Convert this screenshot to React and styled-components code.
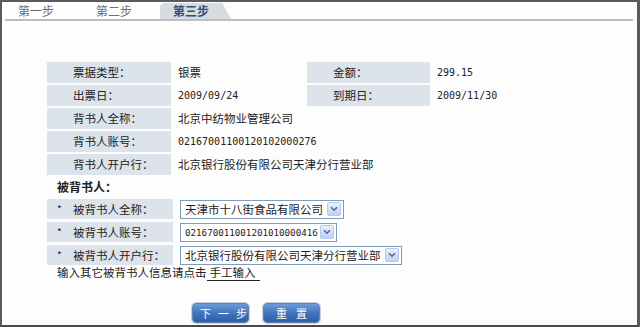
import React from 'react';
import styled, { createGlobalStyle } from 'styled-components';

const Global = createGlobalStyle`
  html, body { margin: 0; padding: 0; background: #fff; }
  body {
    font-family: "Noto Sans CJK SC", "Noto Sans", sans-serif;
    font-size: 12px;
    color: #222;
  }
`;

const Frame = styled.div`
  box-sizing: border-box;
  width: 640px;
  height: 327px;
  border-top: 2px solid #5b5b5b;
  border-left: 2px solid #5b5b5b;
  border-right: 3px solid #5b5b5b;
  border-bottom: 2px solid #4a4a4a;
  background: #fdfdfd;
  display: flex;
  flex-direction: column;
  overflow: hidden;
`;

const TabBar = styled.div`
  display: flex;
  align-items: flex-end;
  height: 17px;
  margin: 0 4px 0 3px;
  padding-left: 13px;
  border-bottom: 2px solid #bdbdbd;
`;

const Tab = styled.div`
  margin-left: ${p => p.$gap || 0}px;
  height: 16px;
  line-height: 16px;
  font-size: 12px;
  white-space: nowrap;
  color: ${p => (p.$active ? '#2f4f7f' : '#6d6d6d')};
  font-weight: ${p => (p.$active ? 700 : 400)};
  padding: ${p => (p.$active ? '0 22px 0 13px' : '0')};
  background: ${p => (p.$active ? '#d7dce2' : 'transparent')};
  clip-path: ${p =>
    p.$active
      ? 'polygon(0 100%, 0 3px, 3px 0, calc(100% - 9px) 0, 100% 100%)'
      : 'none'};
`;

const InfoGrid = styled.div`
  display: grid;
  grid-template-columns: 124px 136px 123px 120px;
  grid-auto-rows: 21px;
  row-gap: 2px;
  margin: 41px 0 0 45px;
`;

const Label = styled.div`
  background: #dce3ea;
  padding-left: 26px;
  line-height: 21px;
  font-size: 11.5px;
  white-space: nowrap;
`;

const Value = styled.div`
  padding-left: 7px;
  line-height: 21px;
  white-space: nowrap;
  grid-column: ${p => (p.$span ? '2 / span 3' : 'auto')};
  font-family: ${p => (p.$mono ? '"DejaVu Sans Mono", monospace' : 'inherit')};
  font-size: ${p => (p.$mono ? '10px' : '11.5px')};
`;

const Heading = styled.div`
  margin: 2px 0 0 55px;
  line-height: 20px;
  font-size: 12px;
  font-weight: 700;
`;

const EndorseGrid = styled.div`
  display: grid;
  grid-template-columns: 126px auto;
  grid-auto-rows: 20px;
  row-gap: 3px;
  justify-items: start;
  margin: 2px 0 0 45px;
`;

const ReqLabel = styled.div`
  justify-self: stretch;
  background: #dce3ea;
  padding-left: 10px;
  line-height: 20px;
  font-size: 11.5px;
  white-space: nowrap;
  display: flex;
  gap: 10px;
`;

const Star = styled.span`
  width: 6px;
  font-size: 10px;
`;

const SelectCell = styled.div`
  padding-left: 7px;
  display: flex;
  align-items: center;
`;

const SelectBox = styled.div`
  box-sizing: border-box;
  width: ${p => p.$w}px;
  height: 19px;
  border: 1px solid #7f9db9;
  background: #fff;
  display: flex;
  align-items: center;
  justify-content: space-between;
  padding: 0 2px 0 4px;
  white-space: nowrap;
  font-family: ${p => (p.$mono ? '"DejaVu Sans Mono", monospace' : 'inherit')};
  font-size: ${p => (p.$mono ? '9.2px' : '11.5px')};
`;

const ArrowBox = styled.span`
  box-sizing: border-box;
  width: 14px;
  height: 14px;
  border: 1px solid #b8c9ec;
  border-radius: 2px;
  background: linear-gradient(#eaf0fc, #bfd0f4);
  display: flex;
  align-items: center;
  justify-content: center;
`;

const Note = styled.div`
  margin: 0 0 0 55px;
  line-height: 14px;
  font-size: 11.5px;
  white-space: nowrap;
`;

const ManualLink = styled.span`
  padding: 0 4px 0 3px;
  border-bottom: 1px solid #222;
`;

const ButtonRow = styled.div`
  display: flex;
  gap: 14px;
  margin: 24px 0 0 190px;
`;

const Button = styled.div`
  box-sizing: border-box;
  width: 57px;
  height: 20px;
  border-radius: 4px;
  border: 1px solid #5f82b3;
  box-shadow: 0 0 0 1px #c3d0e2;
  background: linear-gradient(#6b9bd6, #3f72bb 55%, #2f5fa6);
  color: #fff;
  font-size: 11px;
  line-height: 18px;
  text-align: center;
  letter-spacing: ${p => p.$ls}px;
  text-indent: ${p => p.$ls}px;
  white-space: nowrap;
`;

const Arrow = () => (
  <ArrowBox>
    <svg width="8" height="6" viewBox="0 0 8 6">
      <path d="M1 1.2 L4 4.2 L7 1.2" fill="none" stroke="#4a6aa5" strokeWidth="1.6" />
    </svg>
  </ArrowBox>
);

export default function App() {
  return (
    <>
      <Global />
      <Frame>
        <TabBar>
          <Tab>第一步</Tab>
          <Tab $gap={42}>第二步</Tab>
          <Tab $gap={28} $active>第三步</Tab>
        </TabBar>

        <InfoGrid>
          <Label>票据类型：</Label>
          <Value>银票</Value>
          <Label>金额：</Label>
          <Value $mono>299.15</Value>

          <Label>出票日：</Label>
          <Value $mono>2009/09/24</Value>
          <Label>到期日：</Label>
          <Value $mono>2009/11/30</Value>

          <Label>背书人全称：</Label>
          <Value $span>北京中纺物业管理公司</Value>

          <Label>背书人账号：</Label>
          <Value $span $mono>02167001100120102000276</Value>

          <Label>背书人开户行：</Label>
          <Value $span>北京银行股份有限公司天津分行营业部</Value>
        </InfoGrid>

        <Heading>被背书人：</Heading>

        <EndorseGrid>
          <ReqLabel><Star>*</Star>被背书人全称：</ReqLabel>
          <SelectCell>
            <SelectBox $w={164}>天津市十八街食品有限公司<Arrow /></SelectBox>
          </SelectCell>

          <ReqLabel><Star>*</Star>被背书人账号：</ReqLabel>
          <SelectCell>
            <SelectBox $w={157} $mono>021670011001201010000416<Arrow /></SelectBox>
          </SelectCell>

          <ReqLabel><Star>*</Star>被背书人开户行：</ReqLabel>
          <SelectCell>
            <SelectBox $w={222}>北京银行股份有限公司天津分行营业部<Arrow /></SelectBox>
          </SelectCell>
        </EndorseGrid>

        <Note>
          输入其它被背书人信息请点击<ManualLink>手工输入</ManualLink>
        </Note>

        <ButtonRow>
          <Button $ls={7}>下一步</Button>
          <Button $ls={9}>重置</Button>
        </ButtonRow>
      </Frame>
    </>
  );
}
